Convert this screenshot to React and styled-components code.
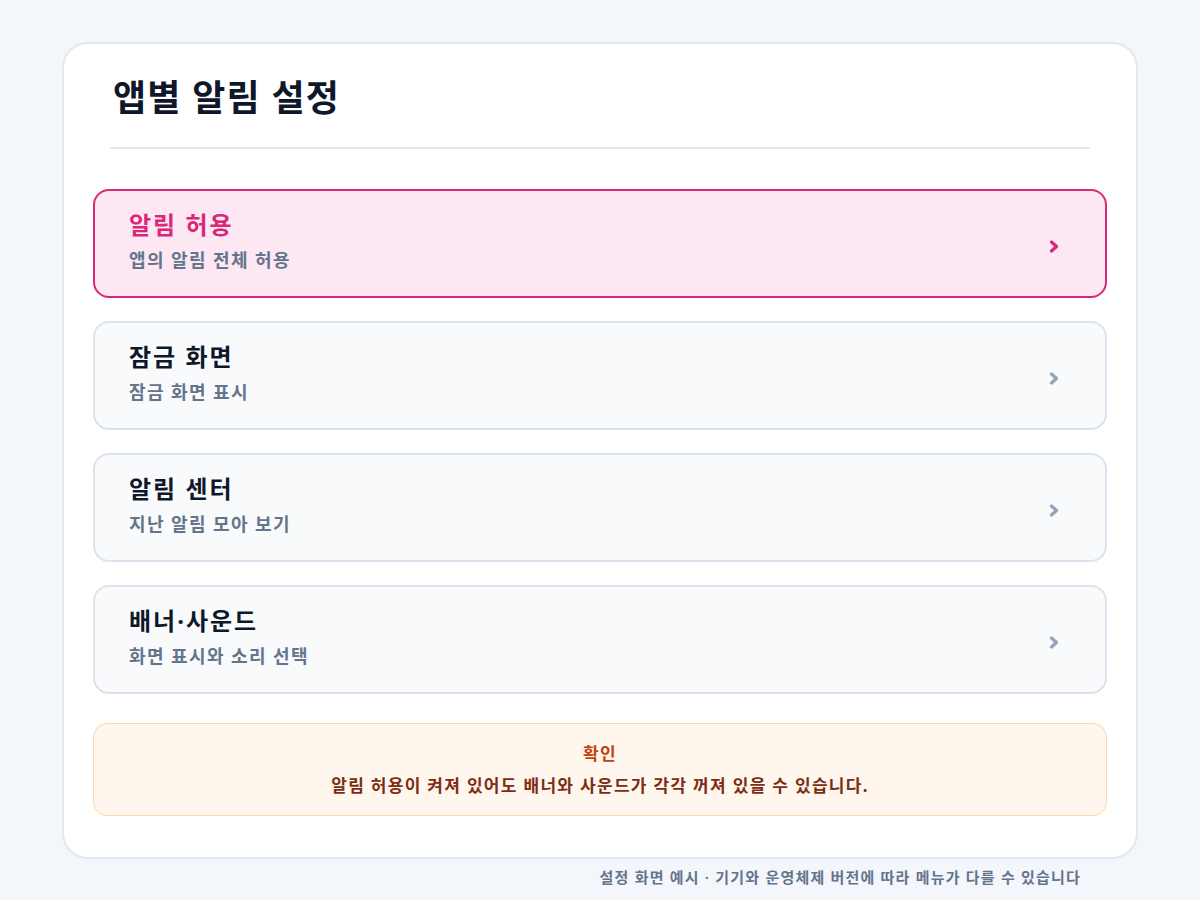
import React from 'react'
import styled, { createGlobalStyle } from 'styled-components';

const GlobalStyle = createGlobalStyle`
    body {
        margin: 0;
        background: #f3f6fb;
        font-family: "Noto Sans", "Noto Sans CJK KR", sans-serif;
    }
`;

const Page = styled.div`
    width: 1200px;
    min-height: 900px;
    padding-top: 42px;
    box-sizing: border-box;
`;

const Card = styled.div`
    margin: 0 62px;
    background: #fff;
    border: 2px solid #e2e8f0;
    border-radius: 26px;
    padding: 0 29px 41px;
    box-sizing: border-box;
`;

const Header = styled.div`
    margin: 0 17px;
    padding: 30px 3px 25px;
    border-bottom: 2px solid #e2e8f0;
`;

const Title = styled.h1`
    margin: 0;
    font-size: 36px;
    font-weight: 700;
    letter-spacing: 1.2px;
    color: #0f172a;
    line-height: 48px;
`;

const List = styled.div`
    display: flex;
    flex-direction: column;
    gap: 23px;
    margin-top: 40px;
`;

const Item = styled.div`
    display: flex;
    align-items: center;
    justify-content: space-between;
    height: 109px;
    box-sizing: border-box;
    padding: 0 46px 6px 34px;
    border: 2px solid ${props => props.active ? '#db2777' : '#dbe3ee'};
    background: ${props => props.active ? '#fce7f3' : '#f8fafc'};
    border-radius: 16px;
`;

const Texts = styled.div`
    display: flex;
    flex-direction: column;
    gap: 6px;
`;

const ItemTitle = styled.div`
    font-size: 24px;
    font-weight: 700;
    letter-spacing: 2px;
    line-height: 32px;
    color: ${props => props.active ? '#db2777' : '#0f172a'};
`;

const ItemSub = styled.div`
    font-size: 18px;
    font-weight: 600;
    letter-spacing: 1.4px;
    line-height: 26px;
    color: #64748b;
`;

const Chevron = styled.svg`
    width: 10px;
    height: 13px;
    margin-top: 12px;
    fill: none;
    stroke: ${props => props.active ? '#db2777' : '#94a3b8'};
    stroke-width: 3.2;
    stroke-linecap: round;
    stroke-linejoin: round;
`;

const Notice = styled.div`
    margin-top: 29px;
    height: 93px;
    box-sizing: border-box;
    background: #fff6ed;
    border: 1px solid #fed7aa;
    border-radius: 14px;
    display: flex;
    flex-direction: column;
    align-items: center;
    justify-content: center;
    gap: 8px;
`;

const NoticeTitle = styled.div`
    font-size: 17px;
    font-weight: 700;
    letter-spacing: 1.3px;
    color: #c2410c;
    line-height: 24px;
`;

const NoticeText = styled.div`
    font-size: 17px;
    font-weight: 700;
    letter-spacing: 1.3px;
    color: #7c2d12;
    line-height: 24px;
`;

const Footer = styled.div`
    text-align: right;
    padding: 7px 119px 0 0;
    font-size: 15px;
    font-weight: 600;
    letter-spacing: 1.2px;
    color: #64748b;
    line-height: 22px;
`;

const items = [
    { title: '알림 허용', sub: '앱의 알림 전체 허용', active: true },
    { title: '잠금 화면', sub: '잠금 화면 표시' },
    { title: '알림 센터', sub: '지난 알림 모아 보기' },
    { title: '배너·사운드', sub: '화면 표시와 소리 선택' },
];

const App = () => {
    return (
        <Page>
            <GlobalStyle />
            <Card>
                <Header>
                    <Title>앱별 알림 설정</Title>
                </Header>
                <List>
                    {items.map((item) => (
                        <Item key={item.title} active={item.active}>
                            <Texts>
                                <ItemTitle active={item.active}>{item.title}</ItemTitle>
                                <ItemSub>{item.sub}</ItemSub>
                            </Texts>
                            <Chevron active={item.active} viewBox="0 0 10 13">
                                <polyline points="2.5,2 7.5,6.5 2.5,11" />
                            </Chevron>
                        </Item>
                    ))}
                </List>
                <Notice>
                    <NoticeTitle>확인</NoticeTitle>
                    <NoticeText>알림 허용이 켜져 있어도 배너와 사운드가 각각 꺼져 있을 수 있습니다.</NoticeText>
                </Notice>
            </Card>
            <Footer>설정 화면 예시 · 기기와 운영체제 버전에 따라 메뉴가 다를 수 있습니다</Footer>
        </Page>
    )
}

export default App
